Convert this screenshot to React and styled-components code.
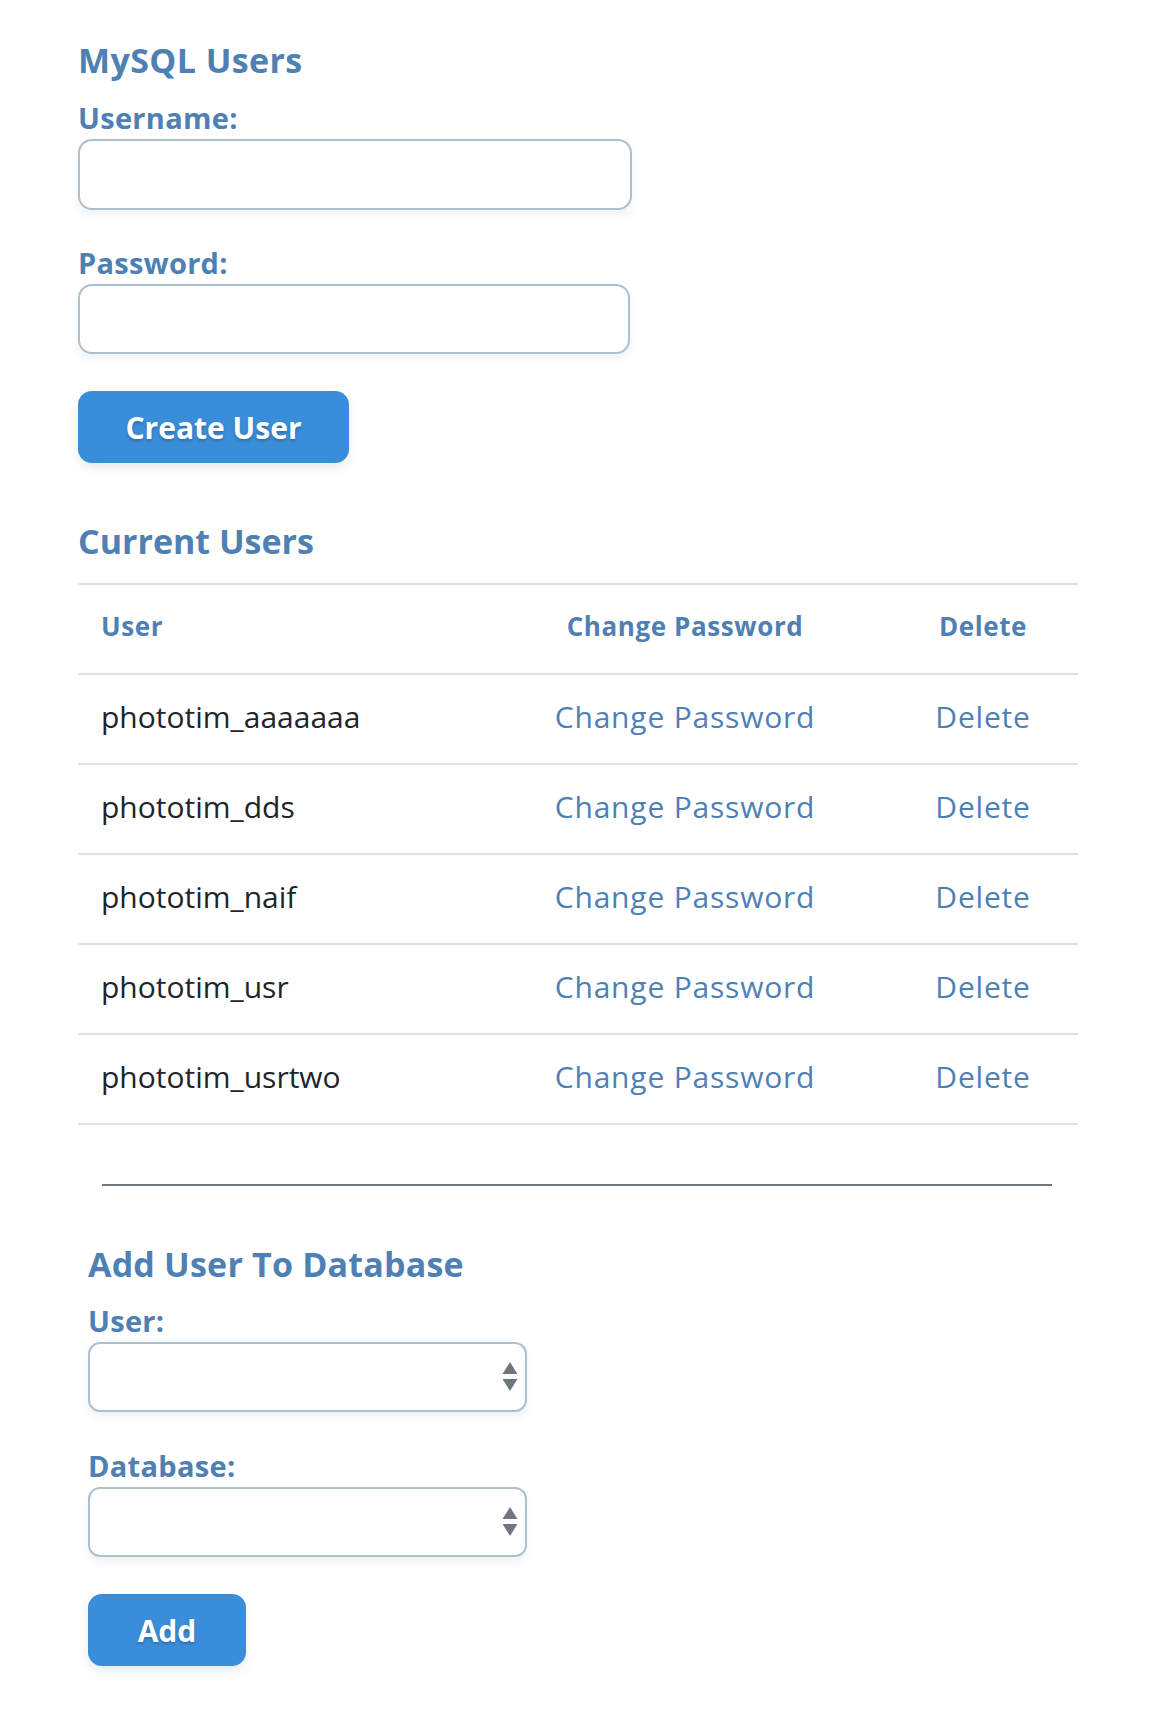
import React from "react";
import styled, { createGlobalStyle } from "styled-components";

const GlobalStyle = createGlobalStyle`
  html, body { margin: 0; padding: 0; background: #ffffff; }
  body { font-family: "Open Sans", "DejaVu Sans", sans-serif; color: #212529; }
  * { box-sizing: border-box; }
`;

const Page = styled.div`
  width: 1000px;
  margin-left: 78px;
  padding-top: 40px;
  padding-bottom: 56px;
`;

const Heading = styled.h2`
  margin: 0;
  font-size: 34px;
  line-height: 40px;
  font-weight: 700;
  color: #4e80b4;
  letter-spacing: ${(p) => p.$ls || 0}px;
`;

const Section = styled.section`
  display: flex;
  flex-direction: column;
  align-items: flex-start;
  padding-left: ${(p) => p.$indent || 0}px;
`;

const Field = styled.div`
  display: flex;
  flex-direction: column;
  margin-top: ${(p) => p.$top}px;
`;

const Label = styled.label`
  font-size: 29px;
  line-height: 34px;
  font-weight: 700;
  color: #4e80b4;
  margin-bottom: 4px;
  letter-spacing: 0.3px;
`;

const TextInput = styled.input`
  width: ${(p) => p.$w}px;
  height: ${(p) => p.$h}px;
  border: 2px solid #aebfd0;
  border-radius: 14px;
  background: #fff;
  box-shadow: 0 5px 8px rgba(40, 60, 90, 0.07);
  outline: none;
  font-size: 28px;
  padding: 0 16px;
`;

const SelectWrap = styled.div`
  position: relative;
  width: 439px;
  height: 70px;
`;

const Select = styled.select`
  appearance: none;
  -webkit-appearance: none;
  width: 100%;
  height: 100%;
  border: 2px solid #aebfd0;
  border-radius: 12px;
  background: #fff;
  box-shadow: 0 5px 8px rgba(40, 60, 90, 0.07);
  outline: none;
  font-size: 28px;
  padding: 0 16px;
`;

const Arrows = styled.svg`
  position: absolute;
  right: 9px;
  top: 20px;
  pointer-events: none;
`;

const Button = styled.button`
  margin-top: ${(p) => p.$top}px;
  width: ${(p) => p.$w}px;
  height: 72px;
  border: none;
  border-radius: 14px;
  background: #3a8dd8;
  color: #ffffff;
  font-family: "Open Sans", "DejaVu Sans", sans-serif;
  font-size: 30px;
  font-weight: 700;
  text-shadow: 0 2px 3px rgba(0, 0, 0, 0.22);
  box-shadow: 0 5px 10px rgba(40, 60, 90, 0.1);
  cursor: pointer;
  padding: 0;
`;

const SubHeading = styled(Heading)`
  margin-top: ${(p) => p.$top}px;
`;

const Table = styled.table`
  margin-top: 22px;
  width: 1000px;
  border-collapse: collapse;
  table-layout: fixed;
`;

const HeadCell = styled.th`
  height: 90px;
  border-top: 2px solid #dee2e6;
  font-size: 26px;
  line-height: 36px;
  letter-spacing: 0.6px;
  font-weight: 700;
  color: #4e80b4;
  text-align: ${(p) => p.$align || "left"};
  padding: 0 ${(p) => (p.$align === "center" ? 0 : 23)}px 6px;
  vertical-align: middle;
`;

const Row = styled.tr`
  &:last-child td { border-bottom: 2px solid #dee2e6; }
`;

const Cell = styled.td`
  height: 90px;
  border-top: 2px solid #dee2e6;
  font-size: 30px;
  line-height: 44px;
  font-weight: 400;
  color: #212529;
  text-align: ${(p) => p.$align || "left"};
  padding: 0 ${(p) => (p.$align === "center" ? 0 : 23)}px 4px;
  vertical-align: middle;
`;

const Link = styled.a`
  color: #4e80b4;
  text-decoration: none;
  letter-spacing: 0.8px;
  cursor: pointer;
`;

const Divider = styled.hr`
  margin: 59px 26px 0 24px;
  border: none;
  border-top: 2px solid #6f767e;
  height: 0;
`;

const users = [
  "phototim_aaaaaaa",
  "phototim_dds",
  "phototim_naif",
  "phototim_usr",
  "phototim_usrtwo",
];

function UpDown() {
  return (
    <Arrows width="16" height="30" viewBox="0 0 16 30">
      <polygon points="8,0 15.5,12 0.5,12" fill="#6f767e" />
      <polygon points="0.5,17 15.5,17 8,29" fill="#6f767e" />
    </Arrows>
  );
}

export default function App() {
  return (
    <>
      <GlobalStyle />
      <Page>
        <Section>
          <Heading $ls={0.4}>MySQL Users</Heading>
          <Field $top={21}>
            <Label>Username:</Label>
            <TextInput type="text" $w={554} $h={71} />
          </Field>
          <Field $top={36}>
            <Label>Password:</Label>
            <TextInput type="password" $w={552} $h={70} />
          </Field>
          <Button $top={37} $w={271}>Create User</Button>
          <SubHeading $top={58}>Current Users</SubHeading>
        </Section>
        <Table>
          <colgroup>
            <col style={{ width: 404 }} />
            <col style={{ width: 406 }} />
            <col style={{ width: 190 }} />
          </colgroup>
          <thead>
            <tr>
              <HeadCell>User</HeadCell>
              <HeadCell $align="center">Change Password</HeadCell>
              <HeadCell $align="center">Delete</HeadCell>
            </tr>
          </thead>
          <tbody>
            {users.map((u) => (
              <Row key={u}>
                <Cell>{u}</Cell>
                <Cell $align="center">
                  <Link>Change Password</Link>
                </Cell>
                <Cell $align="center">
                  <Link>Delete</Link>
                </Cell>
              </Row>
            ))}
          </tbody>
        </Table>
        <Divider />
        <Section $indent={10}>
          <SubHeading $top={58} $ls={0.2}>Add User To Database</SubHeading>
          <Field $top={20}>
            <Label>User:</Label>
            <SelectWrap>
              <Select defaultValue="">
                <option value=""></option>
              </Select>
              <UpDown />
            </SelectWrap>
          </Field>
          <Field $top={37}>
            <Label>Database:</Label>
            <SelectWrap>
              <Select defaultValue="">
                <option value=""></option>
              </Select>
              <UpDown />
            </SelectWrap>
          </Field>
          <Button $top={37} $w={158}>Add</Button>
        </Section>
      </Page>
    </>
  );
}
